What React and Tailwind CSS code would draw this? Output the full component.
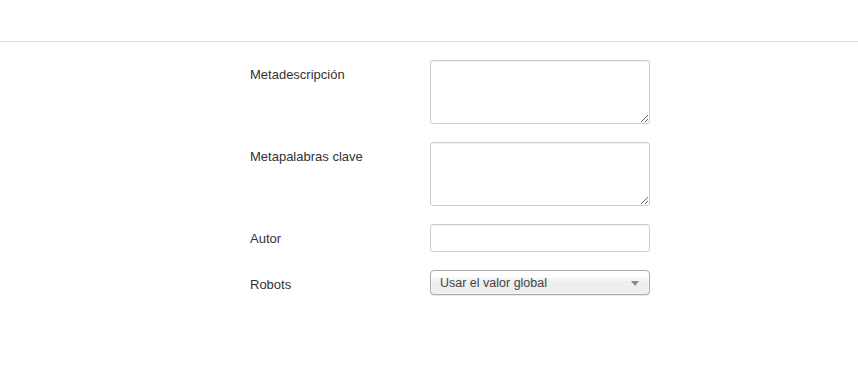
export default function App() {
  const font = { fontFamily: '"Liberation Sans", Arial, sans-serif' };
  return (
    <div className="w-[858px] h-[371px] bg-white text-[#333] text-[13px]" style={font}>
      <div className="h-[42px] border-b border-[#dddddd]" />
      <div className="pt-[18px] pl-[250px] flex flex-col gap-[18px]">
        <div className="flex">
          <label className="w-[180px] pt-[6px] leading-[18px]">Metadescripción</label>
          <textarea className="w-[220px] h-[64px] border border-[#cccccc] rounded-[3px] shadow-[inset_0_1px_1px_rgba(0,0,0,0.075)] bg-white outline-none resize" />
        </div>
        <div className="flex">
          <label className="w-[180px] pt-[6px] leading-[18px]">Metapalabras clave</label>
          <textarea className="w-[220px] h-[64px] border border-[#cccccc] rounded-[3px] shadow-[inset_0_1px_1px_rgba(0,0,0,0.075)] bg-white outline-none resize" />
        </div>
        <div className="flex">
          <label className="w-[180px] pt-[6px] leading-[18px]">Autor</label>
          <div className="w-[220px] h-[28px] border border-[#cccccc] rounded-[3px] shadow-[inset_0_1px_1px_rgba(0,0,0,0.075)] bg-white" />
        </div>
        <div className="flex">
          <label className="w-[180px] pt-[6px] leading-[18px]">Robots</label>
          <div className="w-[220px] h-[25px] border border-[#aaaaaa] rounded-[4px] bg-gradient-to-b from-white from-20% to-[#eeeeee] to-50% flex items-center justify-between pl-[9px] pr-[10px] pt-px shadow-[0_0_3px_white_inset,0_1px_1px_rgba(0,0,0,0.1)] text-[12.5px]">
            <span className="leading-[18px] text-[#444]">Usar el valor global</span>
            <svg width="8" height="5" viewBox="0 0 8 5"><path d="M0 0 L8 0 L4 5 Z" fill="#888" /></svg>
          </div>
        </div>
      </div>
    </div>
  );
}
